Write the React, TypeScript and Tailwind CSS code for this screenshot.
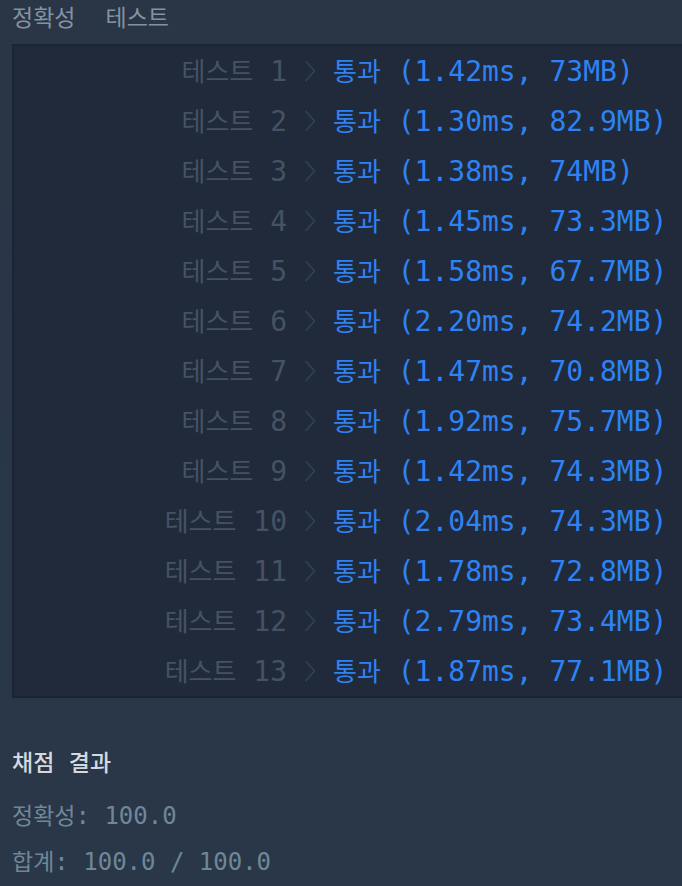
const mono = "font-['DejaVu_Sans_Mono','Noto_Sans_CJK_KR',monospace]";
const ko = "font-['Noto_Sans_CJK_KR',sans-serif]";

const results: [number, string, string][] = [
  [1, "1.42ms", "73MB"],
  [2, "1.30ms", "82.9MB"],
  [3, "1.38ms", "74MB"],
  [4, "1.45ms", "73.3MB"],
  [5, "1.58ms", "67.7MB"],
  [6, "2.20ms", "74.2MB"],
  [7, "1.47ms", "70.8MB"],
  [8, "1.92ms", "75.7MB"],
  [9, "1.42ms", "74.3MB"],
  [10, "2.04ms", "74.3MB"],
  [11, "1.78ms", "72.8MB"],
  [12, "2.79ms", "73.4MB"],
  [13, "1.87ms", "77.1MB"],
];

function Chevron() {
  return (
    <svg width="12" height="22" viewBox="0 0 12 22" fill="none">
      <polyline points="1.5,1 10.5,11 1.5,21" stroke="#344154" strokeWidth="1.6" />
    </svg>
  );
}

export default function App() {
  return (
    <div className={`w-[682px] h-[886px] overflow-hidden bg-gradient-to-b from-[#2a3546] to-[#293748] ${mono}`}>
      {/* Tabs */}
      <div className={`flex h-[44px] items-start pl-3 pt-[1px] gap-[30px] text-[23px] leading-[30px] text-[#8293a3] ${ko}`}>
        <span>정확성</span>
        <span>테스트</span>
      </div>

      {/* Results table */}
      <div className="ml-3 w-[700px] border-2 border-[#1b2434] bg-[#202a3b]">
        {results.map(([n, time, mem]) => (
          <div key={n} className="flex h-[50px] items-center text-[28px] leading-[48px]">
            <div className="w-[273px] text-right text-[#465264] whitespace-pre">
              <span className={`${ko} text-[26px]`}>테스트</span> {n}
            </div>
            <div className="w-[46px] flex justify-center">
              <Chevron />
            </div>
            <div className="text-[#2f82f4] whitespace-pre">
              <span className={`${ko} text-[26px]`}>통과</span> ({time}, {mem})
            </div>
          </div>
        ))}
      </div>

      {/* Summary */}
      <div className="px-3 pt-[48px]">
        <div className="text-[24px] leading-[30px] text-[#d3d9df] whitespace-pre">
          <span className={`${ko} text-[23px] font-medium`}>채점</span>{" "}
          <span className={`${ko} text-[23px] font-medium`}>결과</span>
        </div>
        <div className="mt-[21px] text-[24px] leading-[30px] text-[#6f8798] whitespace-pre">
          <span className={`${ko} text-[23px]`}>정확성</span>: 100.0
        </div>
        <div className="mt-[14px] text-[24px] leading-[30px] text-[#6f8798] whitespace-pre">
          <span className={`${ko} text-[23px]`}>합계</span>: 100.0 / 100.0
        </div>
      </div>
    </div>
  );
}
